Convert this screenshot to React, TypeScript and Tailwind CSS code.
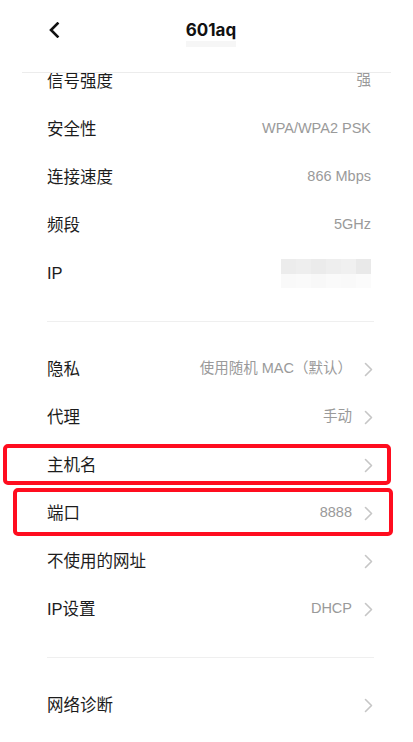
import React from "react";

const cjk = { fontFamily: '"Liberation Sans", "Noto Sans CJK SC", sans-serif' };

function Chevron() {
  return (
    <svg width="9" height="15" viewBox="0 0 9 15" className="shrink-0">
      <path d="M1.5 1.5l6 6-6 6" fill="none" stroke="#c6c6c6" strokeWidth="1.6" strokeLinecap="round" strokeLinejoin="round" />
    </svg>
  );
}

type RowProps = { label: string; value?: React.ReactNode; arrow?: boolean };

function Row({ label, value, arrow }: RowProps) {
  return (
    <div className={`flex h-[48px] items-center pl-[47px] ${arrow ? "pr-[40px]" : "pr-[42px]"}`}>
      <span className="text-[16.5px] text-[#1c1c1c]">{label}</span>
      <div className="ml-auto flex items-center">
        {value !== undefined && <span className="text-[14.5px] text-[#9a9a9a]">{value}</span>}
        {arrow && (
          <span className="ml-[12px] flex">
            <Chevron />
          </span>
        )}
      </div>
    </div>
  );
}

function Divider() {
  return (
    <div className="flex h-[48px] items-center pl-[47px] pr-[39px]">
      <div className="h-px w-full bg-[#efefef]" />
    </div>
  );
}

function BlurredIp() {
  const top = ["#ececec", "#eeeeee", "#ebebeb", "#eeeeee", "#f0f0f0", "#e9e9e9"];
  const bottom = ["#f9f9f9", "#fafafa", "#f8f8f8", "#fafafa", "#f9f9f9", "#fbfbfb"];
  return (
    <div className="flex w-[90px] flex-col">
      <div className="flex h-[15px]">
        {top.map((c, i) => (
          <div key={i} className="h-full flex-1" style={{ background: c }} />
        ))}
      </div>
      <div className="flex h-[14px]">
        {bottom.map((c, i) => (
          <div key={i} className="h-full flex-1" style={{ background: c }} />
        ))}
      </div>
    </div>
  );
}

export default function App() {
  return (
    <div className="relative h-[742px] w-[413px] overflow-hidden bg-white" style={cjk}>
      {/* top bar */}
      <div className="relative flex h-[72px] items-start">
        <div className="absolute left-[48px] top-[22px]">
          <svg width="12" height="16" viewBox="0 0 12 16">
            <path d="M9.5 1.5L3 8l6.5 6.5" fill="none" stroke="#111" strokeWidth="2.6" strokeLinecap="square" />
          </svg>
        </div>
        <div className="flex w-full justify-center pl-[9px] pt-[18px]">
          <div className="relative">
            <div className="absolute bottom-[-3px] left-0 h-[6px] w-full bg-[#f6f6f6]" />
            <span
              className="relative text-[17px] font-bold text-[#111]"
              style={{ fontFamily: 'Inter, "Liberation Sans", sans-serif' }}
            >
              601aq
            </span>
          </div>
        </div>
      </div>
      <div className="mx-[22px] h-px bg-[#ececec]" />

      {/* scrolled list */}
      <div className="overflow-hidden">
        <div className="-mt-[16px]">
          <Row label="信号强度" value="强" />
          <Row label="安全性" value="WPA/WPA2 PSK" />
          <Row label="连接速度" value="866 Mbps" />
          <Row label="频段" value="5GHz" />
          <Row label="IP" value={<BlurredIp />} />
          <Divider />
          <Row label="隐私" value="使用随机 MAC（默认）" arrow />
          <Row label="代理" value="手动" arrow />
          <Row label="主机名" arrow />
          <Row label="端口" value="8888" arrow />
          <Row label="不使用的网址" arrow />
          <Row label="IP设置" value="DHCP" arrow />
          <Divider />
          <Row label="网络诊断" arrow />
        </div>
      </div>

      {/* highlight marks */}
      <div className="pointer-events-none absolute left-[3px] top-[444px] h-[41px] w-[388px] rounded-[5px] border-[4px] border-[#ff0d1f]" />
      <div className="pointer-events-none absolute left-[13px] top-[488px] h-[48px] w-[380px] rounded-[5px] border-[4px] border-[#ff0d1f]" />
    </div>
  );
}
